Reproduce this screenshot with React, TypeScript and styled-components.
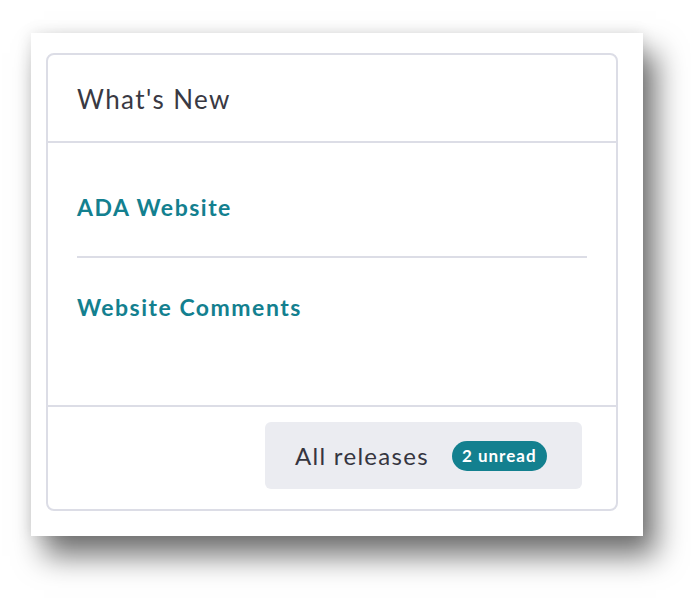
import styled, { createGlobalStyle } from 'styled-components';

const GlobalStyle = createGlobalStyle`
  body {
    margin: 0;
    background: #ffffff;
    font-family: Lato, "Open Sans", sans-serif;
  }
`

const Page = styled.div`
  min-height: 100vh;
  box-sizing: border-box;
  padding: 33px 0 62px 31px;
`

const Frame = styled.div`
  width: 612px;
  height: 503px;
  box-sizing: border-box;
  padding: 20px 25px 25px 15px;
  background: #ffffff;
  box-shadow: 0 0 14px rgba(0, 0, 0, 0.1), 13px 20px 28px rgba(0, 0, 0, 0.55);
`

const Card = styled.div`
  height: 100%;
  box-sizing: border-box;
  border: 2px solid #dcdde6;
  border-radius: 8px;
  display: flex;
  flex-direction: column;
`

const Header = styled.div`
  height: 88px;
  display: flex;
  align-items: center;
  padding: 0 29px;
  border-bottom: 2px solid #dcdde6;
  font-size: 26px;
  letter-spacing: 1.4px;
  color: #393943;
  padding-top: 2px;
  box-sizing: border-box;
`

const Body = styled.div`
  flex: 1;
  padding: 15px 29px 0;
`

const Item = styled.a<{ $divided?: boolean }>`
  display: block;
  padding: 35px 0;
  font-size: 23px;
  line-height: 28px;
  letter-spacing: 1.5px;
  font-weight: 700;
  color: #13808f;
  text-decoration: none;
  border-bottom: ${p => (p.$divided ? '2px solid #dcdde6' : 'none')};
`

const Footer = styled.div`
  display: flex;
  justify-content: flex-end;
  padding: 15px 34px 20px;
  border-top: 2px solid #dcdde6;
`

const ReleasesButton = styled.button`
  width: 317px;
  height: 67px;
  display: flex;
  align-items: center;
  gap: 23px;
  padding: 0 30px;
  border: none;
  border-radius: 6px;
  background: #ebecf1;
  font-family: inherit;
  font-size: 24px;
  letter-spacing: 1.3px;
  color: #35353f;
  cursor: pointer;
`

const Badge = styled.span`
  display: inline-flex;
  align-items: center;
  height: 30px;
  padding: 0 10px;
  border-radius: 15px;
  background: #13808f;
  color: #ffffff;
  font-size: 17px;
  letter-spacing: 1px;
  font-weight: 700;
`

const releases = ['ADA Website', 'Website Comments']

function App() {
  return (
    <Page>
      <GlobalStyle />
      <Frame>
        <Card>
          <Header>What's New</Header>
          <Body>
            {releases.map((r, i) => (
              <Item key={r} href="#" $divided={i < releases.length - 1}>{r}</Item>
            ))}
          </Body>
          <Footer>
            <ReleasesButton>
              All releases
              <Badge>2 unread</Badge>
            </ReleasesButton>
          </Footer>
        </Card>
      </Frame>
    </Page>
  )
}

export default App
